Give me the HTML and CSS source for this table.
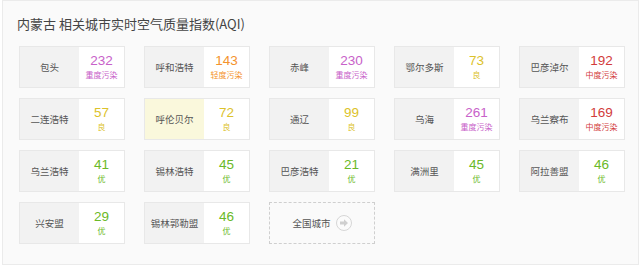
FILE: index.html
```html
<!DOCTYPE html>
<html lang="zh">
<head>
<meta charset="utf-8">
<title>AQI</title>
<link rel="stylesheet" href="styles.css">
</head>
<body>
<div class="panel">
  <h2 class="title">内蒙古 相关城市实时空气质量指数(AQI)</h2>
  <div class="grid">
    <div class="card"><div class="name">包头</div><div class="val heavy"><span class="num">232</span><span class="lvl">重度污染</span></div></div>
    <div class="card"><div class="name">呼和浩特</div><div class="val light"><span class="num">143</span><span class="lvl">轻度污染</span></div></div>
    <div class="card"><div class="name">赤峰</div><div class="val heavy"><span class="num">230</span><span class="lvl">重度污染</span></div></div>
    <div class="card"><div class="name">鄂尔多斯</div><div class="val good"><span class="num">73</span><span class="lvl">良</span></div></div>
    <div class="card"><div class="name">巴彦淖尔</div><div class="val mid"><span class="num">192</span><span class="lvl">中度污染</span></div></div>

    <div class="card"><div class="name">二连浩特</div><div class="val good"><span class="num">57</span><span class="lvl">良</span></div></div>
    <div class="card current"><div class="name">呼伦贝尔</div><div class="val good"><span class="num">72</span><span class="lvl">良</span></div></div>
    <div class="card"><div class="name">通辽</div><div class="val good"><span class="num">99</span><span class="lvl">良</span></div></div>
    <div class="card"><div class="name">乌海</div><div class="val heavy"><span class="num">261</span><span class="lvl">重度污染</span></div></div>
    <div class="card"><div class="name">乌兰察布</div><div class="val mid"><span class="num">169</span><span class="lvl">中度污染</span></div></div>

    <div class="card"><div class="name">乌兰浩特</div><div class="val best"><span class="num">41</span><span class="lvl">优</span></div></div>
    <div class="card"><div class="name">锡林浩特</div><div class="val best"><span class="num">45</span><span class="lvl">优</span></div></div>
    <div class="card"><div class="name">巴彦浩特</div><div class="val best"><span class="num">21</span><span class="lvl">优</span></div></div>
    <div class="card"><div class="name">满洲里</div><div class="val best"><span class="num">45</span><span class="lvl">优</span></div></div>
    <div class="card"><div class="name">阿拉善盟</div><div class="val best"><span class="num">46</span><span class="lvl">优</span></div></div>

    <div class="card"><div class="name">兴安盟</div><div class="val best"><span class="num">29</span><span class="lvl">优</span></div></div>
    <div class="card"><div class="name">锡林郭勒盟</div><div class="val best"><span class="num">46</span><span class="lvl">优</span></div></div>
    <a class="card more" href="#">
      <span class="more-text">全国城市</span>
      <svg class="arrow" width="16" height="16" viewBox="0 0 16 16" aria-hidden="true">
        <circle cx="8" cy="8" r="7.5" fill="#fbfbfb" stroke="#d6d6d6" stroke-width="1"/>
        <path d="M4 6.6 H8 V4.2 L12 8 L8 11.8 V9.4 H4 Z" fill="#cfcfcf"/>
      </svg>
    </a>
  </div>
</div>
</body>
</html>
```

FILE: styles.css
```css
html, body {
  margin: 0;
  padding: 0;
  background: #ffffff;
}

body {
  font-family: "Noto Sans CJK SC", "Noto Sans", sans-serif;
  color: #555;
}

.panel {
  box-sizing: border-box;
  margin: 0 1px 0 2px;
  height: 265px;
  border: 1px solid #ebebeb;
  background: #fafafa;
  padding: 14px 0 0 14px;
}

.title {
  margin: 0;
  font-size: 13px;
  line-height: 18px;
  font-weight: normal;
  color: #444;
}

.grid {
  margin-top: 13px;
  padding-left: 2px;
  display: grid;
  grid-template-columns: repeat(5, 106px);
  column-gap: 19px;
  row-gap: 10px;
}

.card {
  box-sizing: border-box;
  height: 42px;
  display: flex;
  border: 1px solid #e8e8e8;
  background: #fff;
}

.name {
  width: 59px;
  background: #f2f2f2;
  display: flex;
  align-items: center;
  justify-content: center;
  font-size: 9.5px;
  color: #555;
  white-space: nowrap;
}

.current .name {
  background: #faf8dc;
}

.val {
  flex: 1;
  display: flex;
  flex-direction: column;
  align-items: center;
  justify-content: center;
}

.num {
  display: block;
  font-family: "Liberation Sans", Arial, sans-serif;
  font-size: 13.5px;
  line-height: 16px;
}

.lvl {
  display: block;
  font-size: 8px;
  line-height: 12px;
}

.heavy { color: #c862c9; }
.light { color: #f4932c; }
.good { color: #dcc22a; }
.mid { color: #d23b3b; }
.best { color: #6ab927; }

.more {
  border: 1px dashed #cfcfcf;
  background: transparent;
  align-items: center;
  justify-content: center;
  gap: 5px;
  text-decoration: none;
}

.more-text {
  font-size: 9.5px;
  color: #555;
}

.arrow {
  display: block;
}
```
